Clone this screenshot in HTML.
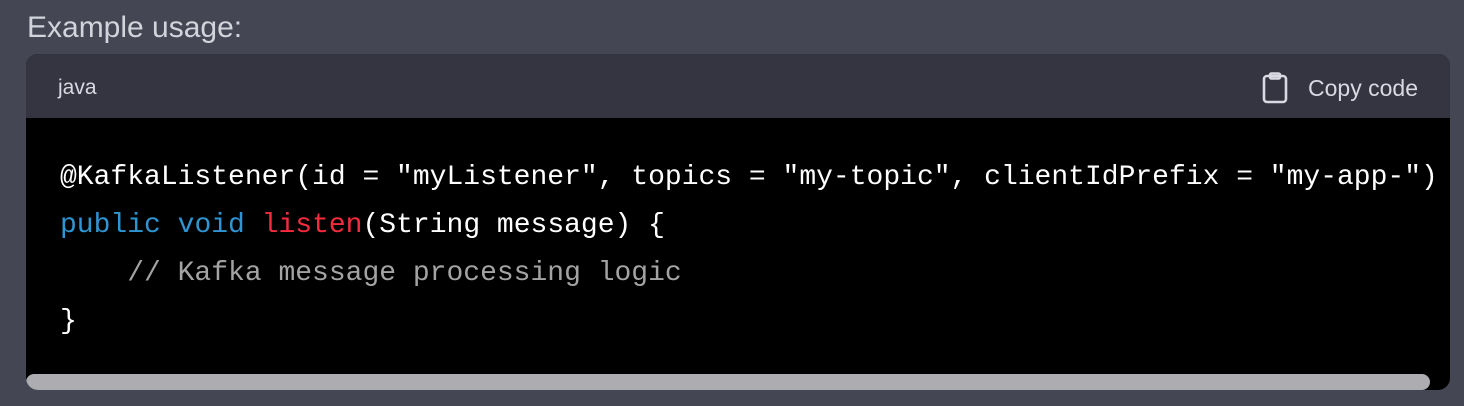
<!DOCTYPE html>
<html><head><meta charset="utf-8"><style>
body{margin:0;width:1464px;height:406px;background:#444654;overflow:hidden;font-family:"Liberation Sans",sans-serif;}
.t{position:absolute;left:27px;top:11px;font-size:30px;color:#d1d5db;}
.box{position:absolute;left:26px;top:54px;width:1424px;height:336px;border-radius:12px;overflow:hidden;background:#000;}
.hd{height:64px;background:#343541;color:#d9d9e3;position:relative;}
.java{position:absolute;left:32px;top:22px;font-size:21px;}
.cp{position:absolute;right:32px;top:18px;font-size:23px;display:flex;align-items:center;gap:18px;}
pre{margin:0;position:absolute;left:34px;top:100px;font-family:"Liberation Mono",monospace;font-size:28px;line-height:48px;color:#fff;}
.k{color:#2e95d3}.f{color:#f22c3d}.c{color:#a3a3a3}
.sb{position:absolute;left:0;bottom:0;width:1404px;height:16px;border-radius:8px;background:#acacb1;}
</style></head><body>
<div class="t">Example usage:</div>
<div class="box">
<div class="hd"><span class="java">java</span>
<span class="cp"><svg width="28" height="32" viewBox="0 0 28 32" fill="none" stroke="#d9d9e3" stroke-width="2.6" stroke-linejoin="round"><rect x="2" y="4" width="22" height="26" rx="3"/><rect x="8" y="1.5" width="10" height="5" rx="1.5"/></svg>Copy code</span></div>
<pre>@KafkaListener(id = "myListener", topics = "my-topic", clientIdPrefix = "my-app-")
<span class="k">public</span> <span class="k">void</span> <span class="f">listen</span>(String message) {
    <span class="c">// Kafka message processing logic</span>
}</pre>
<div class="sb"></div>
</div>
</body></html>
